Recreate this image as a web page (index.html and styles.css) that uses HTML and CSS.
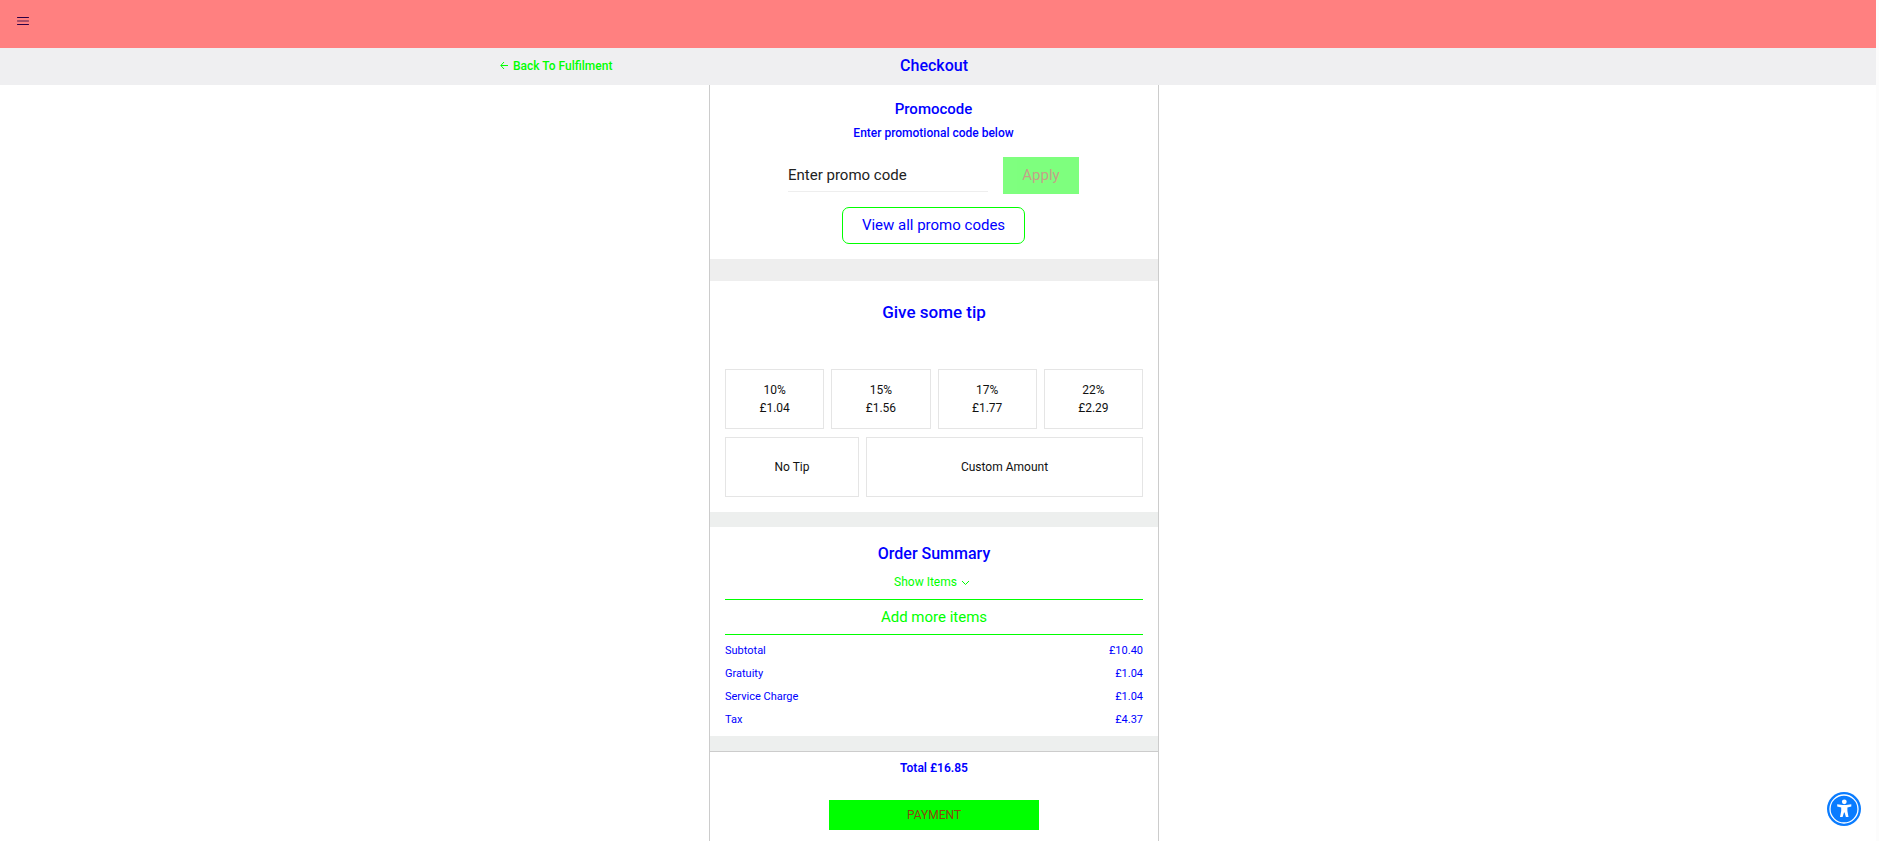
FILE: index.html
```
<!DOCTYPE html>
<html lang="en">
<head>
    <meta charset="UTF-8">
    <meta name="viewport" content="width=device-width, initial-scale=1.0">
    <title>Checkout</title>
    <link rel="stylesheet" href="styles.css">
</head>
<body>

    <header class="topbar">
        <button class="menu-button" aria-label="Menu">
            <svg width="12" height="10" viewBox="0 0 12 10" fill="none" stroke="#2b0045">
                <path d="M0.5 1.5h11M0.5 8.5h11" stroke-linecap="round"/>
                <path d="M0.5 5h11" stroke-linecap="round" stroke-opacity="0.8"/>
            </svg>
        </button>
    </header>

    <div class="subbar">
        <div class="subbar-inner">
            <a class="back-link" href="#">
                <svg width="9" height="9" viewBox="0 0 9 9" fill="none" stroke="currentColor">
                    <path d="M8 4.5H1M4 1L0.8 4.5L4 8"/>
                </svg>
                Back To Fulfilment
            </a>
            <h1>Checkout</h1>
        </div>
    </div>

    <main class="page">
        <div class="checkout">
            <section class="promo">
                <h2>Promocode</h2>
                <label for="promoCode">Enter promotional code below</label>
                <form class="promo-form">
                    <input type="text" id="promoCode" placeholder="Enter promo code">
                    <button class="apply-button" type="submit" disabled>Apply</button>
                </form>
                <button class="view-button">View all promo codes</button>
            </section>

            <section class="tip">
                <h2>Give some tip</h2>
                <div class="tip-row">
                    <button>10%<br>£1.04</button>
                    <button>15%<br>£1.56</button>
                    <button>17%<br>£1.77</button>
                    <button>22%<br>£2.29</button>
                </div>
                <div class="tip-row tip-other">
                    <button>No Tip</button>
                    <button>Custom Amount</button>
                </div>
            </section>

            <section class="summary">
                <h2>Order Summary</h2>
                <button class="show-items">
                    Show Items
                    <svg width="9" height="6" viewBox="0 0 9 6" fill="none" stroke="currentColor">
                        <path d="M1 1L4.5 4.5L8 1"/>
                    </svg>
                </button>
                <a class="add-items" href="#">Add more items</a>
                <table>
                    <tr><th scope="row">Subtotal</th><td>£10.40</td></tr>
                    <tr><th scope="row">Gratuity</th><td>£1.04</td></tr>
                    <tr><th scope="row">Service Charge</th><td>£1.04</td></tr>
                    <tr><th scope="row">Tax</th><td>£4.37</td></tr>
                </table>
            </section>

            <section class="payment">
                <p>Total £16.85</p>
                <button>PAYMENT</button>
            </section>
        </div>
    </main>

    <button class="accessibility" aria-label="Accessibility">
        <svg width="34" height="34" viewBox="0 0 34 34">
            <circle cx="17" cy="17" r="17" fill="#0a7cff"/>
            <circle cx="17" cy="17" r="14" fill="none" stroke="#fff" stroke-width="1.3"/>
            <circle cx="17.3" cy="9.8" r="2.4" fill="#fff"/>
            <path d="M10.2 12.2L15.5 13H19L24.3 12.2V14.4L20.4 15.4V19L21.5 25H18.9L17.6 20.5H17L15.6 25H13L14.2 19V15.4L10.2 14.4Z" fill="#fff"/>
        </svg>
    </button>

</body>
</html>
```
FILE: styles.css
```
* {
    box-sizing: border-box;
}

body {
    display: flex;
    flex-direction: column;
    min-height: 100vh;
    margin: 0;
    border-right: 3px solid #fcfcfc;
    background-color: #fff;
    color: #0000ff;
    font-family: Roboto, sans-serif;
    font-size: 12px;
    line-height: 18px;
}

button,
input {
    font-family: inherit;
    font-size: inherit;
    line-height: inherit;
}

button {
    padding: 0;
    border: none;
    background: none;
    cursor: pointer;
}

h1,
h2 {
    margin: 0;
    font-size: 16px;
    font-weight: 500;
    line-height: 22px;
}

.topbar {
    height: 48px;
    padding: 16px 17px;
    background-color: #ff8080;
}

.menu-button,
.menu-button svg {
    display: block;
}

.subbar {
    padding: 0 8px 2px 0;
    background-color: #efeff1;
}

.subbar-inner {
    display: grid;
    grid-template-columns: 1fr auto 1fr;
    align-items: center;
    max-width: 868px;
    height: 35px;
    margin: 0 auto;
}

.back-link {
    color: #00ff00;
    font-weight: 500;
    text-decoration: none;
}

.back-link svg {
    margin-right: 1px;
}

.page {
    display: flex;
    flex: 1;
    justify-content: center;
    padding-right: 8px;
}

.checkout {
    width: 100%;
    max-width: 450px;
    border: 1px solid #ccc;
    border-width: 0 1px;
    text-align: center;
}

.promo {
    padding: 14px 16px 15px 15px;
    border-bottom: 22px solid #eee;
}

.promo h2 {
    margin-bottom: 5px;
    font-size: 15px;
    line-height: 20px;
}

.promo label {
    font-weight: 500;
}

.promo-form {
    display: flex;
    justify-content: center;
    gap: 15px;
    margin: 15px 0 13px;
}

.promo-form input {
    width: 200px;
    height: 35px;
    padding: 2px 0 0;
    border: none;
    border-bottom: 1px solid #eee;
    font-size: 15px;
}

.promo-form input::placeholder {
    color: #222;
}

.apply-button {
    width: 76px;
    height: 37px;
    padding-bottom: 2px;
    background-color: #00ff00;
    color: #8b4513;
    font-size: 15px;
    opacity: 0.5;
}

.view-button {
    display: block;
    height: 37px;
    margin: 0 auto;
    padding: 0 19px 2px;
    border: 1px solid #00ff00;
    border-radius: 7px;
    color: #0000ff;
    font-size: 15px;
}

.tip {
    padding: 20px 15px 15px;
    border-bottom: 15px solid #edefee;
}

.tip h2 {
    margin-bottom: 46px;
    font-size: 17px;
    font-weight: 500;
}

.tip-row {
    display: grid;
    grid-template-columns: repeat(4, 1fr);
    gap: 7px;
}

.tip-other {
    grid-template-columns: 134px 1fr;
    margin-top: 8px;
}

.tip-row button {
    height: 60px;
    border: 1px solid #e5e5e5;
    color: #111;
}

.summary {
    padding: 16px 15px 5px;
    border-bottom: 15px solid #edefee;
}

.show-items {
    display: block;
    margin: 8px auto;
    padding-right: 4px;
    color: #00ff00;
}

.show-items svg {
    margin-left: 1px;
}

.add-items {
    display: block;
    border: 1px solid #00ff00;
    border-width: 1px 0;
    color: #00ff00;
    font-size: 15px;
    line-height: 34px;
    text-decoration: none;
}

.summary table {
    width: 100%;
    margin-top: 4px;
    border-collapse: collapse;
    font-size: 11px;
}

.summary th,
.summary td {
    height: 23px;
    padding: 0;
    font-weight: 400;
    text-align: left;
}

.summary td {
    text-align: right;
}

.payment {
    padding: 7px 15px 11px;
    border-top: 1px solid #ccc;
}

.payment p {
    margin: 0 0 23px;
    font-weight: 600;
}

.payment button {
    width: 210px;
    height: 30px;
    background-color: #00ff00;
    color: #8b4513;
}

.accessibility {
    position: fixed;
    right: 18px;
    bottom: 15px;
}

.accessibility svg {
    display: block;
}
```
